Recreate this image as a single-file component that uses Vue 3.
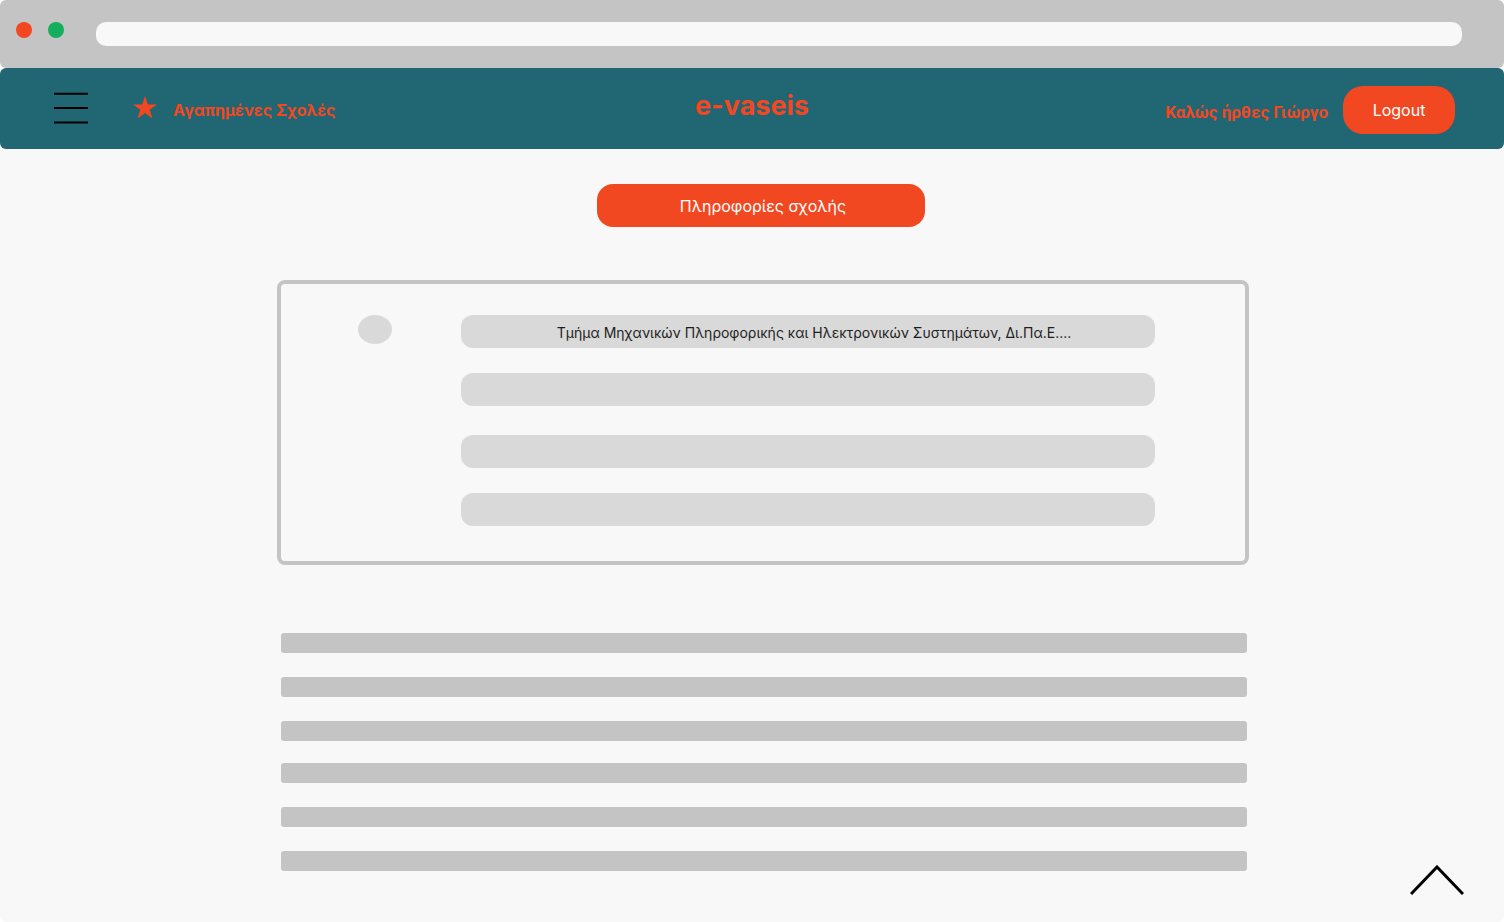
<script setup>
import { ref } from 'vue'

const address = ref('')
const school = 'Τμήμα Μηχανικών Πληροφορικής και Ηλεκτρονικών Συστημάτων, Δι.Πα.Ε....'
const rows = [
  [school, ''],
  ['', ''],
]
const paragraphs = [3, 3]

function scrollToTop() {
  window.scrollTo({ top: 0, behavior: 'smooth' })
}
</script>

<template>
  <div class="window">
    <div class="chrome">
      <span class="dot dot-red"></span>
      <span class="dot dot-green"></span>
      <input v-model="address" class="address" type="text" aria-label="Διεύθυνση" />
    </div>

    <header class="topbar">
      <div class="side side-start">
        <button class="menu" type="button" aria-label="Μενού">
          <svg width="34" height="32" viewBox="0 0 34 32" fill="none" stroke="#000" stroke-width="2">
            <path d="M0 1.7H34M0 16H34M0 30.5H34" />
          </svg>
        </button>
        <a class="favourites" href="#favourites">
          <svg class="star" width="24" height="23" viewBox="0 0 24 23" fill="#f24822">
            <path d="M12 0L14.9 8.4H24L16.7 13.7L19.5 22.4L12 17.1L4.5 22.4L7.3 13.7L0 8.4H9.1Z" />
          </svg>
          <span class="label">Αγαπημένες Σχολές</span>
        </a>
      </div>
      <h1 class="brand">e-vaseis</h1>
      <div class="side side-end">
        <span class="welcome">Καλώς ήρθες Γιώργο</span>
        <button class="logout" type="button">Logout</button>
      </div>
    </header>

    <main class="content">
      <button class="info" type="button">Πληροφορίες σχολής</button>

      <section class="card">
        <span class="bullet"></span>
        <div class="groups">
          <div v-for="(group, g) in rows" :key="g" class="group">
            <div v-for="(text, i) in group" :key="i" class="field">{{ text }}</div>
          </div>
        </div>
      </section>

      <section class="text">
        <div v-for="(count, p) in paragraphs" :key="p" class="paragraph">
          <div v-for="n in count" :key="n" class="line"></div>
        </div>
      </section>
    </main>

    <button class="to-top" type="button" aria-label="Επιστροφή στην κορυφή" @click="scrollToTop">
      <svg width="54" height="30" viewBox="0 0 54 30" fill="none" stroke="#000" stroke-width="3">
        <path d="M1 29L27 2L53 29" />
      </svg>
    </button>
  </div>
</template>

<style>
body {
  background: #fff;
}
</style>

<style scoped>
.window {
  position: relative;
  box-sizing: border-box;
  min-height: 100vh;
  border-radius: 6px;
  background: linear-gradient(#fff 0 140px, #f8f8f8 140px);
  font-family: Inter, "Liberation Sans", sans-serif;
  font-size: 16px;
  line-height: 20px;
}

button {
  padding: 0;
  border: 0;
  background: none;
  font: inherit;
  cursor: pointer;
}

svg {
  display: block;
}

.chrome {
  display: flex;
  align-items: flex-start;
  gap: 16px;
  box-sizing: border-box;
  height: 68px;
  padding: 22px 42px 22px 16px;
  border-radius: 6px;
  background: #c4c4c4;
}

.dot {
  width: 16px;
  height: 16px;
  border-radius: 50%;
}

.dot-red {
  background: #f24822;
}

.dot-green {
  background: #14ae5c;
}

.address {
  flex: 1;
  box-sizing: border-box;
  height: 24px;
  margin-left: 16px;
  padding: 0 12px;
  border: 0;
  border-radius: 10px;
  background: #f8f8f8;
  font: inherit;
}

.topbar {
  display: grid;
  grid-template-columns: 1fr auto 1fr;
  align-items: center;
  min-height: 81px;
  box-sizing: border-box;
  padding: 0 54px;
  border-radius: 6px;
  background: #206673;
  color: #f24822;
}

.side {
  display: flex;
  align-items: center;
  gap: 45px;
}

.side-start {
  padding-bottom: 2px;
  font-weight: 700;
}

.side-end {
  justify-content: flex-end;
  gap: 15px;
  margin-right: -5px;
  padding-top: 2px;
}

.favourites {
  display: flex;
  align-items: center;
  gap: 16px;
  color: inherit;
  text-decoration: none;
}

.label,
.welcome {
  padding-top: 4px;
}

.welcome {
  font-family: Roboto, Inter, sans-serif;
  font-size: 17px;
  font-weight: 700;
}

.brand {
  margin: 0;
  padding-bottom: 6px;
  font-size: 27px;
  line-height: 36px;
  font-weight: 700;
}

.logout {
  width: 112px;
  height: 48px;
  border-radius: 20px;
  background: #f24822;
  color: #fff;
}

.content {
  display: flex;
  flex-direction: column;
  box-sizing: border-box;
  width: 994px;
  max-width: 100%;
  margin: 0 auto;
  padding: 35px 0 51px 22px;
}

.info {
  align-self: center;
  width: 328px;
  height: 43px;
  margin-right: 4px;
  padding: 0 0 0 4px;
  border-radius: 16px;
  background: #f24822;
  color: #fff;
}

.card {
  display: flex;
  align-items: flex-start;
  gap: 69px;
  margin-top: 53px;
  padding: 31px 90px 35px 77px;
  border: 4px solid #c4c4c4;
  border-radius: 8px;
}

.bullet {
  width: 34px;
  height: 29px;
  border-radius: 50%;
  background: #d9d9d9;
}

.groups {
  display: flex;
  flex: 1;
  flex-direction: column;
  gap: 29px;
}

.group {
  display: flex;
  flex-direction: column;
  gap: 25px;
}

.field {
  box-sizing: border-box;
  min-height: 33px;
  padding: 8px 12px 5px 24px;
  border-radius: 12px;
  background: #d9d9d9;
  color: #1e1e1e;
  font-size: 14px;
  text-align: center;
}

.text {
  display: flex;
  flex-direction: column;
  gap: 22px;
  margin: 68px 2px 0 4px;
}

.paragraph {
  display: flex;
  flex-direction: column;
  gap: 24px;
}

.line {
  height: 20px;
  border-radius: 3px;
  background: #c4c4c4;
}

.to-top {
  position: absolute;
  right: 40px;
  bottom: 27px;
}
</style>
